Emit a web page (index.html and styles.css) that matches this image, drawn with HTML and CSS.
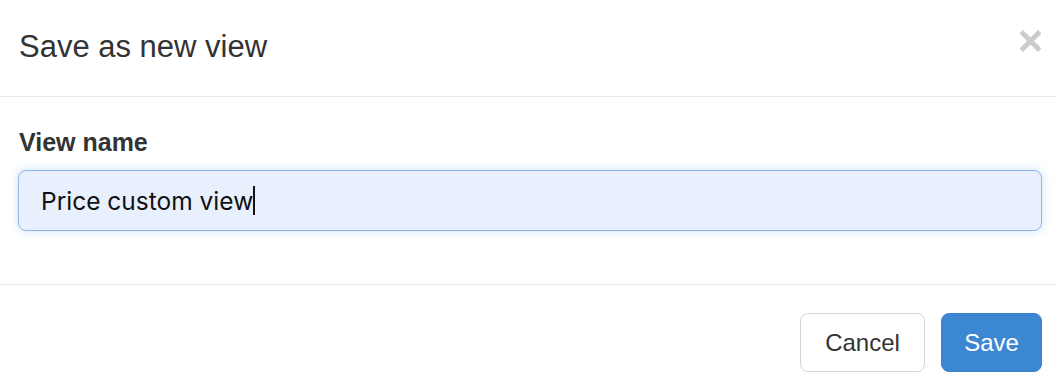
FILE: index.html
```html
<!DOCTYPE html>
<html lang="en">
<head>
  <meta charset="UTF-8" />
  <title>Save as new view</title>
  <link rel="stylesheet" href="styles.css">
</head>
<body>

  <div class="modal">
    <div class="modal-header">
      <h4 class="modal-title">Save as new view</h4>
      <button class="close" type="button" aria-label="Close">
        <svg width="21" height="22" viewBox="0 0 21 22">
          <path d="M3 3.5 L18 18.5 M18 3.5 L3 18.5" stroke="#cccccc" stroke-width="5" stroke-linecap="square" fill="none" />
        </svg>
      </button>
    </div>

    <div class="modal-body">
      <label for="viewName">View name</label>
      <div class="input-wrap">
        <input id="viewName" type="text" value="Price custom view">
        <span class="caret-text">Price custom view<span class="caret"></span></span>
      </div>
    </div>

    <div class="modal-footer">
      <button class="btn btn-default" type="button">Cancel</button>
      <button class="btn btn-primary" type="button">Save</button>
    </div>
  </div>

</body>
</html>
```

FILE: styles.css
```css
body {
  margin: 0;
  background: #fff;
  font-family: "Liberation Sans", Arial, sans-serif;
  color: #333;
}

.modal {
  width: 1057px;
  height: 391px;
  background: #fff;
}

.modal-header {
  height: 97px;
  border-bottom: 1px solid #e8e8e8;
  display: flex;
  align-items: center;
  justify-content: space-between;
  padding: 0 16px 0 19px;
  box-sizing: border-box;
}

.modal-title {
  margin: 0;
  font-size: 31px;
  font-weight: normal;
  color: #333;
  padding-bottom: 2px;
}

.close {
  border: 0;
  background: none;
  padding: 0;
  margin-top: -14px;
  cursor: pointer;
  display: flex;
}

.modal-body {
  height: 188px;
  border-bottom: 1px solid #e8e8e8;
  padding: 30px 15px 0 18px;
  box-sizing: border-box;
}

label {
  display: block;
  font-size: 25px;
  font-weight: bold;
  color: #333;
  margin: 0 0 13px 1px;
  line-height: 30px;
}

.input-wrap {
  position: relative;
}

input {
  display: block;
  width: 100%;
  height: 61px;
  box-sizing: border-box;
  border: 1px solid #8db6e6;
  border-radius: 8px;
  background: #e8f0fe;
  box-shadow: 0 0 10px rgba(102, 165, 233, 0.35);
  padding: 0 22px;
  font-family: Inter, "Liberation Sans", sans-serif;
  font-size: 24.5px;
  color: #111;
  outline: none;
}

.caret-text {
  position: absolute;
  left: 23px;
  top: 0;
  height: 61px;
  line-height: 61px;
  font-family: Inter, "Liberation Sans", sans-serif;
  font-size: 24.5px;
  color: transparent;
  pointer-events: none;
}

.caret {
  display: inline-block;
  width: 2px;
  height: 29px;
  background: #111;
  vertical-align: middle;
  margin-top: -4px;
}

.modal-footer {
  display: flex;
  justify-content: flex-end;
  gap: 16px;
  padding: 28px 15px 0 0;
}

.btn {
  height: 59px;
  border-radius: 8px;
  font-family: "Liberation Sans", Arial, sans-serif;
  font-size: 24px;
  padding: 0 22px;
  cursor: pointer;
  box-sizing: border-box;
}

.btn-default {
  width: 125px;
  background: #fff;
  border: 1px solid #d6d6d6;
  color: #333;
}

.btn-primary {
  width: 101px;
  background: #3c87d2;
  border: 1px solid #3a83cc;
  color: #fff;
}
```
